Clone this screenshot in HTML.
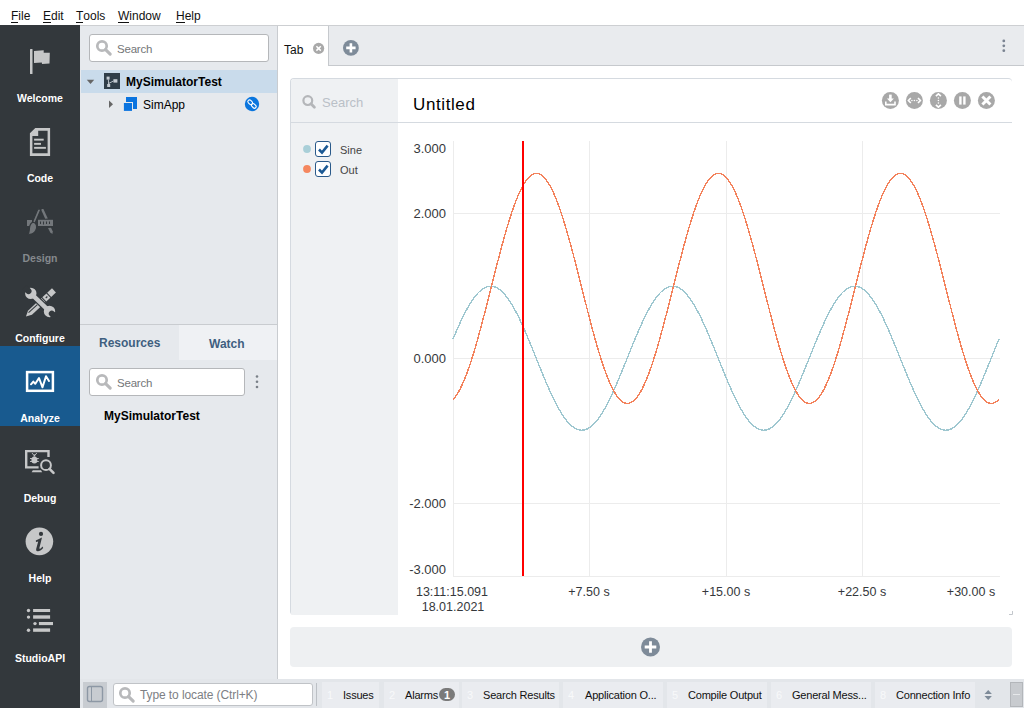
<!DOCTYPE html>
<html><head><meta charset="utf-8">
<style>
*{margin:0;padding:0;box-sizing:border-box}
html,body{width:1024px;height:708px;overflow:hidden;background:#fff;font-family:"Liberation Sans",sans-serif;font-size:12px;color:#1a1a1a}
.a{position:absolute}
svg{position:absolute;overflow:visible}
.mi{position:absolute;top:9px;font-size:12px;color:#111;line-height:14px;white-space:nowrap}
.mi u{text-decoration:none;position:relative}
.mi u:after{content:"";position:absolute;left:0;right:0;top:13px;height:1px;background:#111}
.sbl{position:absolute;left:0;width:80px;text-align:center;font-weight:bold;font-size:10.5px;color:#fff;line-height:14px;white-space:nowrap}
.search{position:absolute;background:#fff;border:1px solid #b5b7ba;border-radius:3px}
.ph{position:absolute;color:#747678;font-size:12px;white-space:nowrap;line-height:14px}
.st{position:absolute;top:682px;height:26px;background:#eaecf0;font-size:11px;letter-spacing:-0.2px;line-height:26px;color:#111;white-space:nowrap}
.st .n{position:absolute;color:#f8f9fa;top:0}
.st .t{position:absolute;top:0}
.yl{position:absolute;font-size:13px;color:#35383b;line-height:15px;text-align:right;width:60px;white-space:nowrap}
.xl{position:absolute;font-size:12.5px;color:#35383b;line-height:14px;text-align:center;width:100px;white-space:nowrap}
.cb{position:absolute;width:16px;height:16px;border:1.5px solid #2a5a8a;border-radius:3px;background:#fff}
</style></head><body>
<!-- menubar -->
<div class="a" style="left:0;top:0;width:1024px;height:25px;background:#fff"></div>
<span class="mi" style="left:11px"><u>F</u>ile</span>
<span class="mi" style="left:43px"><u>E</u>dit</span>
<span class="mi" style="left:76px"><u>T</u>ools</span>
<span class="mi" style="left:118px"><u>W</u>indow</span>
<span class="mi" style="left:176px"><u>H</u>elp</span>
<div class="a" style="left:80px;top:25px;width:944px;height:1px;background:#cdcfd2"></div>

<!-- sidebar -->
<div class="a" style="left:0;top:25px;width:80px;height:683px;background:#33383c"></div>
<div class="a" style="left:0;top:346px;width:80px;height:80px;background:#185a8f"></div>
<svg width="80" height="683" style="left:0;top:0" viewBox="0 0 80 683">
 <g fill="#c6c7c8">
  <!-- welcome flag -->
  <rect x="30" y="49" width="2.5" height="25" rx="0.5"/>
  <path d="M34,51 L43.7,50.2 L43.7,52.7 L49.8,52.7 L49.5,63.5 L42,64 L41.8,62.6 L34,63 Z"/>
  <!-- code doc -->
  <path fill-rule="evenodd" d="M35.3,128 L50.1,128 L50.1,156 L29.9,156 L29.9,133.3 Z M38.2,130.7 L47.6,130.7 L47.6,153.3 L32.4,153.3 L32.4,136 L38.2,136 Z"/>
  <rect x="34.1" y="138.7" width="9.6" height="1.9"/>
  <rect x="34.1" y="142.9" width="6.9" height="1.9"/>
  <rect x="34.1" y="146.9" width="11.8" height="1.9"/>
 </g>
 <!-- design (dim) -->
 <g fill="#73777b" stroke="none">
  <rect x="38" y="219.8" width="15" height="6.2"/>
  <rect x="27" y="220" width="5" height="6"/>
  <path d="M40.8,209 L43.4,209 L47.8,218.6 L45.2,218.8 Z"/>
  <path d="M48,228 L51,227.8 L52.8,231.5 L52.4,234 L50.3,232.6 Z"/>
 </g>
 <g fill="#33383c"><rect x="40" y="221.5" width="1" height="2.5"/><rect x="43" y="221.5" width="1" height="3"/><rect x="46" y="221.5" width="1" height="2.5"/><rect x="49" y="221.5" width="1" height="2.5"/></g>
 <g fill="#73777b" stroke="#33383c" stroke-width="1.2">
  <path d="M38,208.8 L41,209.2 L35,223.2 L32.4,222.2 Z"/>
  <path d="M33.5,222.2 C36.8,223.2 37.4,227 35.8,230.2 C34.2,233.2 31,234.8 27.8,234 C29.4,232.6 29.2,230.5 29.4,228.5 C29.7,225.3 31,222.6 33.5,222.2 Z"/>
 </g>
 <!-- configure -->
 <g transform="translate(40.2,303.2) rotate(-43)">
  <path d="M-19.5,0 L-14,-2.9 L4.5,-2.9 L4.5,2.9 L-14,2.9 Z" fill="#c6c7c8"/>
  <path d="M-15,-1 L-3,-1" stroke="#33383c" stroke-width="1" />
  <rect x="5.6" y="-2.9" width="5.6" height="5.8" fill="#c6c7c8"/>
  <rect x="7.6" y="-0.6" width="2.2" height="1.2" fill="#33383c"/>
  <rect x="12.3" y="-2.9" width="6.5" height="5.8" fill="#c6c7c8"/>
 </g>
 <g transform="translate(40.15,302.4) rotate(44)">
  <g fill="#33383c" stroke="#33383c" stroke-width="2.4">
   <rect x="-13" y="-2.2" width="26" height="4.4"/>
  </g>
  <g fill="#c6c7c8">
   <rect x="-13" y="-2.2" width="26" height="4.4"/>
   <circle cx="-13" cy="0" r="5.7"/>
   <circle cx="13" cy="0" r="5.7"/>
  </g>
  <g fill="#33383c">
   <circle cx="-16.2" cy="0" r="3"/>
   <rect x="-22" y="-3" width="5.8" height="6"/>
   <circle cx="16.2" cy="0" r="3"/>
   <rect x="16.2" y="-3" width="5.8" height="6"/>
  </g>
 </g>
 <!-- analyze -->
 <g fill="none" stroke="#fff">
  <rect x="27.1" y="372.1" width="25.8" height="18.7" stroke-width="2.5"/>
  <path d="M31,384.3 L33.3,381.6 L35.3,383.8 L39,378 L42.5,387.3 L46,376.3 L49,381" stroke-width="2" stroke-linejoin="round" stroke-linecap="round"/>
 </g>
 <!-- debug -->
 <g fill="none" stroke="#c6c7c8" stroke-width="2.4">
  <path d="M48.5,457 L48.5,451.1 L26.2,451.1 L26.2,467.4 L38.6,467.4"/>
  <circle cx="46" cy="465.2" r="4.9" stroke-width="2"/>
  <path d="M49.5,468.8 L53.5,472.8" stroke-width="2.6" stroke-linecap="round"/>
 </g>
 <g fill="#c6c7c8">
  <path d="M31.6,472.3 L32.8,470.2 L41,470.2 L42.2,472.3 Z"/>
  <ellipse cx="34.4" cy="460" rx="3" ry="3.6"/>
  <rect x="33.6" y="454.5" width="1.6" height="2"/>
  <path d="M30,458.5 L38.8,458.5 M30,461.5 L38.8,461.5" stroke="#c6c7c8" stroke-width="0.9"/>
  <path d="M32,453 L33.8,455.2 M36.8,453 L35,455.2" stroke="#c6c7c8" stroke-width="0.9"/>
 </g>
 <!-- help -->
 <circle cx="39.4" cy="541.4" r="13.8" fill="#c6c7c8"/>
 <circle cx="41" cy="533.9" r="2.1" fill="#33383c"/>
 <path d="M35.8,540.4 L42,537.6 L39.4,548 C39.2,548.9 39.8,549 40.6,548.4 L42.6,546.6 L43.2,548 C41,550.6 39,551.4 37.6,551.2 C36.2,551 35.9,550 36.3,548.4 L38.2,541.4 L36,541.9 Z" fill="#33383c"/>
 <!-- studioapi -->
 <g fill="#c6c7c8">
  <circle cx="28.5" cy="610.5" r="1.7"/><rect x="33.1" y="609" width="17" height="3"/>
  <circle cx="28.5" cy="617.1" r="1.7"/><rect x="33.1" y="615.3" width="17" height="3.4"/>
  <circle cx="35" cy="623.6" r="1.7"/><rect x="38.9" y="622" width="14.1" height="3.1"/>
  <circle cx="28.5" cy="630.2" r="1.7"/><rect x="33.1" y="628.4" width="17" height="3.4"/>
 </g>
</svg>
<div class="sbl" style="top:91px">Welcome</div>
<div class="sbl" style="top:171px">Code</div>
<div class="sbl" style="top:251px;color:#85898d">Design</div>
<div class="sbl" style="top:331px">Configure</div>
<div class="sbl" style="top:411px">Analyze</div>
<div class="sbl" style="top:491px">Debug</div>
<div class="sbl" style="top:571px">Help</div>
<div class="sbl" style="top:651px">StudioAPI</div>

<!-- left panel -->
<div class="a" style="left:80px;top:26px;width:197px;height:653px;background:#e6e9ed"></div>
<div class="a" style="left:277px;top:26px;width:1px;height:653px;background:#c9ccd0"></div>
<div class="search" style="left:89px;top:34px;width:180px;height:28px"></div>
<svg width="20" height="20" style="left:94px;top:38px" viewBox="0 0 20 20"><circle cx="8" cy="8" r="4.7" fill="none" stroke="#b8b9bb" stroke-width="2.7"/><path d="M11.6,11.6 L16.2,16.2" stroke="#b8b9bb" stroke-width="3.1" stroke-linecap="round"/></svg>
<span class="ph" style="left:117px;top:42px;font-size:11.5px;letter-spacing:-0.2px">Search</span>
<div class="a" style="left:81px;top:70px;width:196px;height:23px;background:#c9dbeb"></div>
<svg width="200" height="60" style="left:80px;top:60px" viewBox="80 60 200 60">
 <path d="M86.8,79.8 L94.2,79.8 L90.5,84 Z" fill="#666"/>
 <rect x="104" y="73" width="16" height="16" fill="#2f3e4a"/>
 <g fill="#c3cbd3"><rect x="106.6" y="76.6" width="3" height="3"/><rect x="107.2" y="84" width="3" height="3"/><rect x="113.4" y="79.2" width="4" height="3.4"/></g>
 <path d="M108.4,79.5 L108.6,84.5 M108.6,83.5 L113.4,81" stroke="#c3cbd3" stroke-width="0.9" fill="none"/>
 <path d="M109,100.6 L113,104.3 L109,108 Z" fill="#666"/>
 <rect x="126" y="97" width="11" height="12" fill="#0b74df"/>
 <rect x="123" y="102" width="10" height="10" fill="#e6e9ed"/>
 <rect x="123.9" y="103" width="8.1" height="7.9" fill="#0b74df"/>
 <circle cx="252" cy="104" r="7.2" fill="#0b76de"/>
 <g fill="none" stroke="#fff" stroke-width="1.1"><rect x="247.6" y="100.6" width="5.2" height="3.4" rx="1.7" transform="rotate(45 250.2 102.3)"/><rect x="251.2" y="104.2" width="5.2" height="3.4" rx="1.7" transform="rotate(45 253.8 105.9)"/></g>
</svg>
<span class="a" style="left:126px;top:75px;font-weight:bold;font-size:12px;line-height:14px;color:#000;white-space:nowrap">MySimulatorTest</span>
<span class="a" style="left:143px;top:98px;font-size:12px;line-height:14px;color:#000;white-space:nowrap">SimApp</span>
<div class="a" style="left:80px;top:324px;width:197px;height:1px;background:#c9ccd0"></div>
<div class="a" style="left:179px;top:325px;width:98px;height:35px;background:#eff1f4"></div>
<span class="a" style="left:99px;top:336px;font-weight:bold;font-size:12px;line-height:14px;color:#3f5f80;white-space:nowrap">Resources</span>
<span class="a" style="left:209px;top:337px;font-weight:bold;font-size:12px;line-height:14px;color:#3f5f80;white-space:nowrap">Watch</span>
<div class="search" style="left:89px;top:368px;width:156px;height:28px"></div>
<svg width="20" height="20" style="left:94px;top:372px" viewBox="0 0 20 20"><circle cx="8" cy="8" r="4.7" fill="none" stroke="#b8b9bb" stroke-width="2.7"/><path d="M11.6,11.6 L16.2,16.2" stroke="#b8b9bb" stroke-width="3.1" stroke-linecap="round"/></svg>
<span class="ph" style="left:117px;top:376px;font-size:11.5px;letter-spacing:-0.2px">Search</span>
<svg width="6" height="20" style="left:254px;top:372px" viewBox="0 0 6 20"><g fill="#7a8088"><circle cx="3" cy="4.5" r="1.3"/><circle cx="3" cy="9.8" r="1.3"/><circle cx="3" cy="15" r="1.3"/></g></svg>
<span class="a" style="left:104px;top:409px;font-weight:bold;font-size:12px;line-height:14px;color:#000;white-space:nowrap">MySimulatorTest</span>

<!-- main -->
<div class="a" style="left:278px;top:26px;width:746px;height:40px;background:#e9ebee"></div>
<div class="a" style="left:278px;top:65px;width:746px;height:1px;background:#c6c9cd"></div>
<div class="a" style="left:278px;top:26px;width:50px;height:40px;background:#fff"></div>
<div class="a" style="left:328px;top:26px;width:1px;height:40px;background:#c6c9cd"></div>
<div class="a" style="left:278px;top:66px;width:746px;height:613px;background:#fff"></div>
<span class="a" style="left:284px;top:43px;font-size:12px;line-height:14px;color:#111;white-space:nowrap">Tab</span>
<svg width="746" height="60" style="left:278px;top:26px" viewBox="278 26 746 60">
 <circle cx="318.6" cy="48.4" r="5.6" fill="#a9a9a9"/>
 <path d="M316.4,46.2 L320.8,50.6 M320.8,46.2 L316.4,50.6" stroke="#fff" stroke-width="1.5"/>
 <circle cx="350.9" cy="47.9" r="7.9" fill="#7e8b99"/>
 <path d="M350.9,43.2 L350.9,52.6 M346.2,47.9 L355.6,47.9" stroke="#fff" stroke-width="2.6"/>
 <g fill="#7a8391"><circle cx="1003.8" cy="40.9" r="1.4"/><circle cx="1003.8" cy="45.8" r="1.4"/><circle cx="1003.8" cy="50.7" r="1.4"/></g>
</svg>
<!-- chart panel -->
<div class="a" style="left:290px;top:78px;width:722px;height:537px;border:1px solid #d5dae0;border-right:none;border-bottom:none;border-radius:4px 4px 0 4px;background:#fff"></div>
<div class="a" style="left:291px;top:79px;width:107px;height:536px;background:#eff1f3;border-radius:3px 0 0 3px"></div>
<div class="a" style="left:290px;top:122px;width:722px;height:1px;background:#d5dae0"></div>
<svg width="20" height="20" style="left:300px;top:92px" viewBox="0 0 20 20"><circle cx="7.8" cy="8.6" r="4.4" fill="none" stroke="#b4b6b9" stroke-width="2.2"/><path d="M11,11.8 L14.4,15.2" stroke="#b4b6b9" stroke-width="2.8" stroke-linecap="round"/></svg>
<span class="a" style="left:322px;top:95px;font-size:13px;line-height:15px;color:#bac0c7;white-space:nowrap">Search</span>
<span class="a" style="left:413px;top:95px;font-size:17px;line-height:19px;color:#000;white-space:nowrap;letter-spacing:0.6px">Untitled</span>
<svg width="120" height="24" style="left:878px;top:88px" viewBox="878 88 120 24">
 <g fill="#a8a8a8"><circle cx="890.4" cy="100.5" r="8.5"/><circle cx="914.4" cy="100.5" r="8.5"/><circle cx="938.4" cy="100.5" r="8.5"/><circle cx="962.4" cy="100.5" r="8.5"/><circle cx="986.4" cy="100.5" r="8.5"/></g>
 <g stroke="#fff" fill="none" stroke-width="1.6">
  <path d="M890.4,94.6 L890.4,99" stroke-width="2.6"/><path d="M886.9,98.4 L893.9,98.4 L890.4,102.2 Z" fill="#fff" stroke="none"/>
  <path d="M885.8,101.4 L885.8,104.6 L895,104.6 L895,101.4"/>
  <path d="M910.8,98 L908.4,100.5 L910.8,103 M918,98 L920.4,100.5 L918,103" />
  <path d="M935.9,96.2 L938.4,93.8 L940.9,96.2 M935.9,104.8 L938.4,107.2 L940.9,104.8"/>
  <path d="M982.4,96.5 L990.4,104.5 M990.4,96.5 L982.4,104.5" stroke-width="3"/>
 </g>
 <g fill="#fff"><circle cx="911.9" cy="100.5" r="0.8"/><circle cx="914.4" cy="100.5" r="0.8"/><circle cx="916.9" cy="100.5" r="0.8"/>
  <circle cx="938.4" cy="98" r="0.8"/><circle cx="938.4" cy="100.5" r="0.8"/><circle cx="938.4" cy="103" r="0.8"/>
  <rect x="959.2" y="96.4" width="2.4" height="8.2"/><rect x="963.2" y="96.4" width="2.4" height="8.2"/></g>
</svg>
<!-- legend -->
<svg width="100" height="40" style="left:298px;top:138px" viewBox="298 138 100 40">
 <circle cx="307" cy="149" r="3.9" fill="#a9cfd8"/>
 <circle cx="307" cy="169" r="3.9" fill="#f5875f"/>
</svg>
<div class="cb" style="left:315px;top:141px"></div>
<div class="cb" style="left:315px;top:161px"></div>
<svg width="100" height="40" style="left:298px;top:138px" viewBox="298 138 100 40">
 <path d="M319,149.5 L322,152.6 L327.6,145.6 M319,169.5 L322,172.6 L327.6,165.6" stroke="#1d5a94" stroke-width="2.6" fill="none"/>
</svg>
<span class="a" style="left:340px;top:144px;font-size:11px;line-height:13px;color:#444;white-space:nowrap">Sine</span>
<span class="a" style="left:340px;top:164px;font-size:11px;line-height:13px;color:#444;white-space:nowrap">Out</span>
<!-- chart -->
<svg width="600" height="460" style="left:400px;top:130px" viewBox="400 130 600 460">
 <g stroke="#ececec" stroke-width="1" fill="none">
  <path d="M453,213.5 L1000,213.5 M453,358.5 L1000,358.5 M453,503.5 L1000,503.5 M453,576.5 L1000,576.5"/>
  <path d="M589.5,141 L589.5,576 M726.5,141 L726.5,576 M862.5,141 L862.5,576 M453.5,141 L453.5,576"/>
 </g>
 <polyline points="453,339.0 454,336.7 455,334.3 456,332.0 457,329.7 458,327.4 459,325.2 460,323.0 461,320.8 462,318.7 463,316.7 464,314.7 465,312.7 466,310.8 467,309.0 468,307.2 469,305.5 470,303.8 471,302.2 472,300.7 473,299.2 474,297.8 475,296.5 476,295.3 477,294.1 478,293.0 479,292.0 480,291.1 481,290.2 482,289.4 483,288.7 484,288.1 485,287.6 486,287.1 487,286.8 488,286.5 489,286.3 490,286.2 491,286.2 492,286.3 493,286.4 494,286.7 495,287.0 496,287.4 497,287.9 498,288.5 499,289.1 500,289.9 501,290.7 502,291.6 503,292.6 504,293.7 505,294.8 506,296.0 507,297.3 508,298.7 509,300.1 510,301.6 511,303.2 512,304.8 513,306.5 514,308.3 515,310.1 516,312.0 517,313.9 518,315.9 519,317.9 520,320.0 521,322.1 522,324.3 523,326.5 524,328.8 525,331.0 526,333.4 527,335.7 528,338.1 529,340.5 530,342.9 531,345.3 532,347.8 533,350.3 534,352.7 535,355.2 536,357.7 537,360.2 538,362.7 539,365.1 540,367.6 541,370.1 542,372.5 543,374.9 544,377.4 545,379.7 546,382.1 547,384.4 548,386.7 549,389.0 550,391.2 551,393.4 552,395.6 553,397.7 554,399.7 555,401.7 556,403.7 557,405.6 558,407.4 559,409.2 560,410.9 561,412.6 562,414.2 563,415.7 564,417.2 565,418.6 566,419.9 567,421.1 568,422.3 569,423.4 570,424.4 571,425.3 572,426.2 573,427.0 574,427.7 575,428.3 576,428.8 577,429.3 578,429.6 579,429.9 580,430.1 581,430.2 582,430.2 583,430.1 584,430.0 585,429.7 586,429.4 587,429.0 588,428.5 589,427.9 590,427.3 591,426.5 592,425.7 593,424.8 594,423.8 595,422.7 596,421.6 597,420.4 598,419.1 599,417.7 600,416.3 601,414.8 602,413.2 603,411.6 604,409.9 605,408.1 606,406.3 607,404.4 608,402.5 609,400.5 610,398.5 611,396.4 612,394.3 613,392.1 614,389.9 615,387.6 616,385.4 617,383.0 618,380.7 619,378.3 620,375.9 621,373.5 622,371.1 623,368.6 624,366.1 625,363.7 626,361.2 627,358.7 628,356.2 629,353.7 630,351.3 631,348.8 632,346.3 633,343.9 634,341.5 635,339.0 636,336.7 637,334.3 638,332.0 639,329.7 640,327.4 641,325.2 642,323.0 643,320.8 644,318.7 645,316.7 646,314.7 647,312.7 648,310.8 649,309.0 650,307.2 651,305.5 652,303.8 653,302.2 654,300.7 655,299.2 656,297.8 657,296.5 658,295.3 659,294.1 660,293.0 661,292.0 662,291.1 663,290.2 664,289.4 665,288.7 666,288.1 667,287.6 668,287.1 669,286.8 670,286.5 671,286.3 672,286.2 673,286.2 674,286.3 675,286.4 676,286.7 677,287.0 678,287.4 679,287.9 680,288.5 681,289.1 682,289.9 683,290.7 684,291.6 685,292.6 686,293.7 687,294.8 688,296.0 689,297.3 690,298.7 691,300.1 692,301.6 693,303.2 694,304.8 695,306.5 696,308.3 697,310.1 698,312.0 699,313.9 700,315.9 701,317.9 702,320.0 703,322.1 704,324.3 705,326.5 706,328.8 707,331.0 708,333.4 709,335.7 710,338.1 711,340.5 712,342.9 713,345.3 714,347.8 715,350.3 716,352.7 717,355.2 718,357.7 719,360.2 720,362.7 721,365.1 722,367.6 723,370.1 724,372.5 725,374.9 726,377.4 727,379.7 728,382.1 729,384.4 730,386.7 731,389.0 732,391.2 733,393.4 734,395.6 735,397.7 736,399.7 737,401.7 738,403.7 739,405.6 740,407.4 741,409.2 742,410.9 743,412.6 744,414.2 745,415.7 746,417.2 747,418.6 748,419.9 749,421.1 750,422.3 751,423.4 752,424.4 753,425.3 754,426.2 755,427.0 756,427.7 757,428.3 758,428.8 759,429.3 760,429.6 761,429.9 762,430.1 763,430.2 764,430.2 765,430.1 766,430.0 767,429.7 768,429.4 769,429.0 770,428.5 771,427.9 772,427.3 773,426.5 774,425.7 775,424.8 776,423.8 777,422.7 778,421.6 779,420.4 780,419.1 781,417.7 782,416.3 783,414.8 784,413.2 785,411.6 786,409.9 787,408.1 788,406.3 789,404.4 790,402.5 791,400.5 792,398.5 793,396.4 794,394.3 795,392.1 796,389.9 797,387.6 798,385.4 799,383.0 800,380.7 801,378.3 802,375.9 803,373.5 804,371.1 805,368.6 806,366.1 807,363.7 808,361.2 809,358.7 810,356.2 811,353.7 812,351.3 813,348.8 814,346.3 815,343.9 816,341.5 817,339.0 818,336.7 819,334.3 820,332.0 821,329.7 822,327.4 823,325.2 824,323.0 825,320.8 826,318.7 827,316.7 828,314.7 829,312.7 830,310.8 831,309.0 832,307.2 833,305.5 834,303.8 835,302.2 836,300.7 837,299.2 838,297.8 839,296.5 840,295.3 841,294.1 842,293.0 843,292.0 844,291.1 845,290.2 846,289.4 847,288.7 848,288.1 849,287.6 850,287.1 851,286.8 852,286.5 853,286.3 854,286.2 855,286.2 856,286.3 857,286.4 858,286.7 859,287.0 860,287.4 861,287.9 862,288.5 863,289.1 864,289.9 865,290.7 866,291.6 867,292.6 868,293.7 869,294.8 870,296.0 871,297.3 872,298.7 873,300.1 874,301.6 875,303.2 876,304.8 877,306.5 878,308.3 879,310.1 880,312.0 881,313.9 882,315.9 883,317.9 884,320.0 885,322.1 886,324.3 887,326.5 888,328.8 889,331.0 890,333.4 891,335.7 892,338.1 893,340.5 894,342.9 895,345.3 896,347.8 897,350.3 898,352.7 899,355.2 900,357.7 901,360.2 902,362.7 903,365.1 904,367.6 905,370.1 906,372.5 907,374.9 908,377.4 909,379.7 910,382.1 911,384.4 912,386.7 913,389.0 914,391.2 915,393.4 916,395.6 917,397.7 918,399.7 919,401.7 920,403.7 921,405.6 922,407.4 923,409.2 924,410.9 925,412.6 926,414.2 927,415.7 928,417.2 929,418.6 930,419.9 931,421.1 932,422.3 933,423.4 934,424.4 935,425.3 936,426.2 937,427.0 938,427.7 939,428.3 940,428.8 941,429.3 942,429.6 943,429.9 944,430.1 945,430.2 946,430.2 947,430.1 948,430.0 949,429.7 950,429.4 951,429.0 952,428.5 953,427.9 954,427.3 955,426.5 956,425.7 957,424.8 958,423.8 959,422.7 960,421.6 961,420.4 962,419.1 963,417.7 964,416.3 965,414.8 966,413.2 967,411.6 968,409.9 969,408.1 970,406.3 971,404.4 972,402.5 973,400.5 974,398.5 975,396.4 976,394.3 977,392.1 978,389.9 979,387.6 980,385.4 981,383.0 982,380.7 983,378.3 984,375.9 985,373.5 986,371.1 987,368.6 988,366.1 989,363.7 990,361.2 991,358.7 992,356.2 993,353.7 994,351.3 995,348.8 996,346.3 997,343.9 998,341.5 999,339.0" fill="none" stroke="#9ec7d0" stroke-width="1.4" shape-rendering="crispEdges"/>
 <polyline points="453,399.5 454,398.4 455,397.1 456,395.8 457,394.3 458,392.7 459,391.0 460,389.1 461,387.1 462,385.0 463,382.8 464,380.5 465,378.1 466,375.5 467,372.9 468,370.1 469,367.3 470,364.4 471,361.3 472,358.2 473,355.0 474,351.8 475,348.4 476,345.0 477,341.5 478,337.9 479,334.3 480,330.7 481,326.9 482,323.2 483,319.4 484,315.5 485,311.7 486,307.8 487,303.8 488,299.9 489,295.9 490,292.0 491,288.0 492,284.0 493,280.1 494,276.1 495,272.2 496,268.3 497,264.4 498,260.5 499,256.7 500,252.9 501,249.1 502,245.4 503,241.7 504,238.1 505,234.6 506,231.1 507,227.7 508,224.4 509,221.1 510,217.9 511,214.9 512,211.8 513,208.9 514,206.1 515,203.4 516,200.8 517,198.2 518,195.8 519,193.5 520,191.3 521,189.3 522,187.3 523,185.5 524,183.8 525,182.2 526,180.7 527,179.4 528,178.2 529,177.1 530,176.2 531,175.4 532,174.7 533,174.2 534,173.8 535,173.5 536,173.4 537,173.4 538,173.6 539,173.9 540,174.3 541,174.8 542,175.5 543,176.4 544,177.3 545,178.4 546,179.7 547,181.0 548,182.5 549,184.1 550,185.8 551,187.7 552,189.7 553,191.8 554,194.0 555,196.3 556,198.7 557,201.3 558,203.9 559,206.7 560,209.5 561,212.4 562,215.5 563,218.6 564,221.8 565,225.0 566,228.4 567,231.8 568,235.3 569,238.9 570,242.5 571,246.1 572,249.9 573,253.6 574,257.4 575,261.3 576,265.1 577,269.0 578,273.0 579,276.9 580,280.9 581,284.8 582,288.8 583,292.8 584,296.7 585,300.7 586,304.6 587,308.5 588,312.4 589,316.3 590,320.1 591,323.9 592,327.7 593,331.4 594,335.1 595,338.7 596,342.2 597,345.7 598,349.1 599,352.4 600,355.7 601,358.9 602,361.9 603,365.0 604,367.9 605,370.7 606,373.4 607,376.0 608,378.6 609,381.0 610,383.3 611,385.5 612,387.5 613,389.5 614,391.3 615,393.0 616,394.6 617,396.1 618,397.4 619,398.6 620,399.7 621,400.6 622,401.4 623,402.1 624,402.6 625,403.0 626,403.3 627,403.4 628,403.4 629,403.2 630,402.9 631,402.5 632,402.0 633,401.3 634,400.4 635,399.5 636,398.4 637,397.1 638,395.8 639,394.3 640,392.7 641,391.0 642,389.1 643,387.1 644,385.0 645,382.8 646,380.5 647,378.1 648,375.5 649,372.9 650,370.1 651,367.3 652,364.4 653,361.3 654,358.2 655,355.0 656,351.8 657,348.4 658,345.0 659,341.5 660,337.9 661,334.3 662,330.7 663,326.9 664,323.2 665,319.4 666,315.5 667,311.7 668,307.8 669,303.8 670,299.9 671,295.9 672,292.0 673,288.0 674,284.0 675,280.1 676,276.1 677,272.2 678,268.3 679,264.4 680,260.5 681,256.7 682,252.9 683,249.1 684,245.4 685,241.7 686,238.1 687,234.6 688,231.1 689,227.7 690,224.4 691,221.1 692,217.9 693,214.9 694,211.8 695,208.9 696,206.1 697,203.4 698,200.8 699,198.2 700,195.8 701,193.5 702,191.3 703,189.3 704,187.3 705,185.5 706,183.8 707,182.2 708,180.7 709,179.4 710,178.2 711,177.1 712,176.2 713,175.4 714,174.7 715,174.2 716,173.8 717,173.5 718,173.4 719,173.4 720,173.6 721,173.9 722,174.3 723,174.8 724,175.5 725,176.4 726,177.3 727,178.4 728,179.7 729,181.0 730,182.5 731,184.1 732,185.8 733,187.7 734,189.7 735,191.8 736,194.0 737,196.3 738,198.7 739,201.3 740,203.9 741,206.7 742,209.5 743,212.4 744,215.5 745,218.6 746,221.8 747,225.0 748,228.4 749,231.8 750,235.3 751,238.9 752,242.5 753,246.1 754,249.9 755,253.6 756,257.4 757,261.3 758,265.1 759,269.0 760,273.0 761,276.9 762,280.9 763,284.8 764,288.8 765,292.8 766,296.7 767,300.7 768,304.6 769,308.5 770,312.4 771,316.3 772,320.1 773,323.9 774,327.7 775,331.4 776,335.1 777,338.7 778,342.2 779,345.7 780,349.1 781,352.4 782,355.7 783,358.9 784,361.9 785,365.0 786,367.9 787,370.7 788,373.4 789,376.0 790,378.6 791,381.0 792,383.3 793,385.5 794,387.5 795,389.5 796,391.3 797,393.0 798,394.6 799,396.1 800,397.4 801,398.6 802,399.7 803,400.6 804,401.4 805,402.1 806,402.6 807,403.0 808,403.3 809,403.4 810,403.4 811,403.2 812,402.9 813,402.5 814,402.0 815,401.3 816,400.4 817,399.5 818,398.4 819,397.1 820,395.8 821,394.3 822,392.7 823,391.0 824,389.1 825,387.1 826,385.0 827,382.8 828,380.5 829,378.1 830,375.5 831,372.9 832,370.1 833,367.3 834,364.4 835,361.3 836,358.2 837,355.0 838,351.8 839,348.4 840,345.0 841,341.5 842,337.9 843,334.3 844,330.7 845,326.9 846,323.2 847,319.4 848,315.5 849,311.7 850,307.8 851,303.8 852,299.9 853,295.9 854,292.0 855,288.0 856,284.0 857,280.1 858,276.1 859,272.2 860,268.3 861,264.4 862,260.5 863,256.7 864,252.9 865,249.1 866,245.4 867,241.7 868,238.1 869,234.6 870,231.1 871,227.7 872,224.4 873,221.1 874,217.9 875,214.9 876,211.8 877,208.9 878,206.1 879,203.4 880,200.8 881,198.2 882,195.8 883,193.5 884,191.3 885,189.3 886,187.3 887,185.5 888,183.8 889,182.2 890,180.7 891,179.4 892,178.2 893,177.1 894,176.2 895,175.4 896,174.7 897,174.2 898,173.8 899,173.5 900,173.4 901,173.4 902,173.6 903,173.9 904,174.3 905,174.8 906,175.5 907,176.4 908,177.3 909,178.4 910,179.7 911,181.0 912,182.5 913,184.1 914,185.8 915,187.7 916,189.7 917,191.8 918,194.0 919,196.3 920,198.7 921,201.3 922,203.9 923,206.7 924,209.5 925,212.4 926,215.5 927,218.6 928,221.8 929,225.0 930,228.4 931,231.8 932,235.3 933,238.9 934,242.5 935,246.1 936,249.9 937,253.6 938,257.4 939,261.3 940,265.1 941,269.0 942,273.0 943,276.9 944,280.9 945,284.8 946,288.8 947,292.8 948,296.7 949,300.7 950,304.6 951,308.5 952,312.4 953,316.3 954,320.1 955,323.9 956,327.7 957,331.4 958,335.1 959,338.7 960,342.2 961,345.7 962,349.1 963,352.4 964,355.7 965,358.9 966,361.9 967,365.0 968,367.9 969,370.7 970,373.4 971,376.0 972,378.6 973,381.0 974,383.3 975,385.5 976,387.5 977,389.5 978,391.3 979,393.0 980,394.6 981,396.1 982,397.4 983,398.6 984,399.7 985,400.6 986,401.4 987,402.1 988,402.6 989,403.0 990,403.3 991,403.4 992,403.4 993,403.2 994,402.9 995,402.5 996,402.0 997,401.3 998,400.4 999,399.5" fill="none" stroke="#f3825c" stroke-width="1.4" shape-rendering="crispEdges"/>
 <rect x="522" y="141" width="2" height="435" fill="#ff0000"/>
</svg>
<div class="yl" style="left:386px;top:141px">3.000</div>
<div class="yl" style="left:386px;top:206px">2.000</div>
<div class="yl" style="left:386px;top:351px">0.000</div>
<div class="yl" style="left:386px;top:496px">-2.000</div>
<div class="yl" style="left:386px;top:562px">-3.000</div>
<div class="xl" style="left:402px;top:585px">13:11:15.091</div>
<div class="xl" style="left:403px;top:600px">18.01.2021</div>
<div class="xl" style="left:539px;top:585px">+7.50 s</div>
<div class="xl" style="left:676px;top:585px">+15.00 s</div>
<div class="xl" style="left:812px;top:585px">+22.50 s</div>
<div class="xl" style="left:921px;top:585px">+30.00 s</div>
<svg width="6" height="6" style="left:1008px;top:610px" viewBox="1008 610 6 6"><path d="M1012.5,611 L1012.5,614.5 L1009,614.5" fill="none" stroke="#c3c7cc" stroke-width="1"/></svg>
<!-- add bar -->
<div class="a" style="left:290px;top:627px;width:722px;height:40px;background:#eef0f2;border-radius:4px"></div>
<svg width="24" height="24" style="left:638px;top:635px" viewBox="638 635 24 24">
 <circle cx="650.5" cy="647" r="9.5" fill="#7e8b99"/>
 <path d="M650.5,641.2 L650.5,652.8 M644.7,647 L656.3,647" stroke="#fff" stroke-width="2.8"/>
</svg>

<!-- status -->
<div class="a" style="left:80px;top:679px;width:944px;height:29px;background:#e3e6ea"></div>
<div class="a" style="left:83px;top:682px;width:24px;height:26px;background:#c8ccd1"></div>
<svg width="24" height="26" style="left:83px;top:682px" viewBox="83 682 24 26">
 <rect x="87.5" y="686.5" width="15" height="15" rx="2" fill="none" stroke="#8d98a5" stroke-width="1.4"/>
 <path d="M91.5,687 L91.5,701" stroke="#8d98a5" stroke-width="1"/>
</svg>
<div class="search" style="left:113px;top:683px;width:200px;height:23px;border-radius:3px;border-color:#c0c3c7"></div>
<svg width="20" height="20" style="left:117px;top:685px" viewBox="0 0 20 20"><circle cx="8" cy="8" r="4.7" fill="none" stroke="#b8b9bb" stroke-width="2.7"/><path d="M11.6,11.6 L16.2,16.2" stroke="#b8b9bb" stroke-width="3.1" stroke-linecap="round"/></svg>
<span class="ph" style="left:140px;top:688px;color:#7d8084;letter-spacing:-0.1px">Type to locate (Ctrl+K)</span>
<div class="a" style="left:316px;top:683px;width:1px;height:23px;background:#bcc0c5"></div>
<div class="st" style="left:322px;width:57px"><span class="n" style="left:5px">1</span><span class="t" style="left:21px">Issues</span></div>
<div class="st" style="left:384px;width:75px"><span class="n" style="left:5px">2</span><span class="t" style="left:21px">Alarms</span></div>
<svg width="20" height="16" style="left:438px;top:687px" viewBox="438 687 20 16"><rect x="439" y="688" width="16" height="13" rx="6.5" fill="#7a7a7a"/><text x="447" y="699" text-anchor="middle" font-family="Liberation Sans" font-weight="bold" font-size="11" fill="#fff">1</text></svg>
<div class="st" style="left:462px;width:97px"><span class="n" style="left:5px">3</span><span class="t" style="left:21px">Search Results</span></div>
<div class="st" style="left:563px;width:100px"><span class="n" style="left:5px">4</span><span class="t" style="left:22px">Application O...</span></div>
<div class="st" style="left:667px;width:100px"><span class="n" style="left:5px">5</span><span class="t" style="left:21px">Compile Output</span></div>
<div class="st" style="left:771px;width:100px"><span class="n" style="left:5px">6</span><span class="t" style="left:21px">General Mess...</span></div>
<div class="st" style="left:875px;width:100px"><span class="n" style="left:5px">8</span><span class="t" style="left:21px">Connection Info</span></div>
<svg width="14" height="14" style="left:981px;top:688px" viewBox="981 688 14 14"><path d="M984.5,694 L988.2,690 L991.9,694 Z M984.5,696 L988.2,700 L991.9,696 Z" fill="#7e8b99"/></svg>
<div class="a" style="left:1010px;top:682px;width:13px;height:25px;background:#c8cbcf;border:1px solid #b3b6ba"></div>
<div class="a" style="left:1013px;top:694px;width:7px;height:1px;background:#e6e8ea"></div>
</body></html>
